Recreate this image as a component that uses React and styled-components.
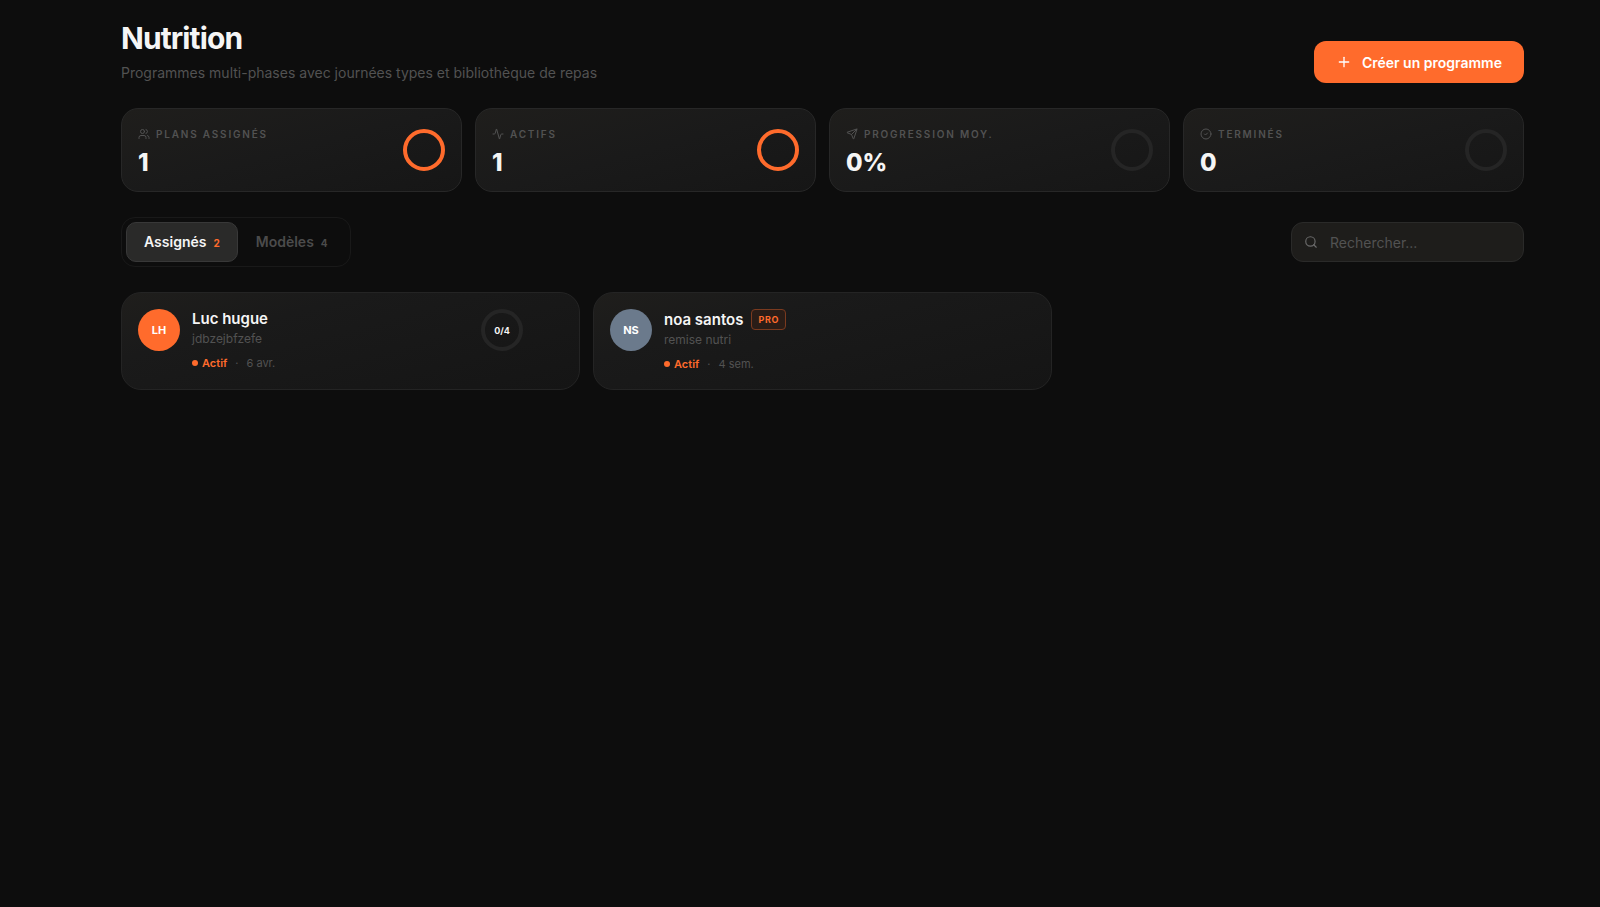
import React, { useState } from "react";
import styled, { createGlobalStyle } from "styled-components";
import { Activity, CircleCheck, Plus, Search, Send, Users } from "lucide-react";

//DATA
const stats = [
  { label: "Plans assignés", value: "1", icon: Users, full: true },
  { label: "Actifs", value: "1", icon: Activity, full: true },
  { label: "Progression moy.", value: "0%", icon: Send, full: false },
  { label: "Terminés", value: "0", icon: CircleCheck, full: false },
];

const clients = [
  {
    initials: "LH",
    name: "Luc hugue",
    plan: "jdbzejbfzefe",
    time: "6 avr.",
    color: "#ff6b2c",
    progress: "0/4",
  },
  {
    initials: "NS",
    name: "noa santos",
    plan: "remise nutri",
    time: "4 sem.",
    color: "#6b7a8c",
    pro: true,
  },
];

const tabs = [
  { id: "assigned", label: "Assignés", count: 2 },
  { id: "models", label: "Modèles", count: 4 },
];

export default function App() {
  const [tab, setTab] = useState("assigned");
  const [query, setQuery] = useState("");

  const shown = clients.filter((c) =>
    c.name.toLowerCase().includes(query.toLowerCase())
  );

  return (
    <>
      <GlobalStyle />
      <Page>
        <Header>
          <div>
            <Title>Nutrition</Title>
            <Subtitle>
              Programmes multi-phases avec journées types et bibliothèque de
              repas
            </Subtitle>
          </div>
          <CreateButton type="button">
            <Plus size={16} strokeWidth={2} />
            Créer un programme
          </CreateButton>
        </Header>

        <Stats>
          {stats.map(({ label, value, icon: Icon, full }) => (
            <StatCard key={label}>
              <div>
                <StatLabel>
                  <Icon size={12} strokeWidth={2} />
                  {label}
                </StatLabel>
                <StatValue>{value}</StatValue>
              </div>
              <Ring $full={full} />
            </StatCard>
          ))}
        </Stats>

        <Toolbar>
          <Tabs role="tablist">
            {tabs.map((t) => (
              <Tab
                key={t.id}
                type="button"
                role="tab"
                aria-selected={tab === t.id}
                $active={tab === t.id}
                onClick={() => setTab(t.id)}
              >
                {t.label}
                <Count $active={tab === t.id}>{t.count}</Count>
              </Tab>
            ))}
          </Tabs>
          <SearchBox>
            <Search size={14} strokeWidth={2} />
            <SearchInput
              type="text"
              aria-label="Rechercher"
              placeholder="Rechercher..."
              value={query}
              onChange={(e) => setQuery(e.target.value)}
            />
          </SearchBox>
        </Toolbar>

        <Clients>
          {shown.map((c) => (
            <ClientCard key={c.name}>
              <Avatar $color={c.color}>{c.initials}</Avatar>
              <Info>
                <NameRow>
                  <Name>{c.name}</Name>
                  {c.pro && <ProBadge>PRO</ProBadge>}
                </NameRow>
                <Plan>{c.plan}</Plan>
                <Meta>
                  <Status>Actif</Status>
                  <span>·</span>
                  <span>{c.time}</span>
                </Meta>
              </Info>
              {c.progress && <Ring>{c.progress}</Ring>}
            </ClientCard>
          ))}
        </Clients>
      </Page>
    </>
  );
}

//STYLED COMPONENTS
const GlobalStyle = createGlobalStyle`
  * {
    box-sizing: border-box;
  }
  body {
    margin: 0;
    background: #0d0d0d;
    color: #f5f5f5;
    font-family: Inter, "Liberation Sans", sans-serif;
    -webkit-font-smoothing: antialiased;
  }
  button,
  input {
    font-family: inherit;
  }
`;

const Page = styled.main`
  padding: 20px 76px 40px 121px;
`;

const Header = styled.header`
  display: flex;
  justify-content: space-between;
  align-items: flex-end;
`;

const Title = styled.h1`
  margin: 0;
  font-size: 30px;
  line-height: 36px;
  font-weight: 700;
  letter-spacing: -0.03em;
`;

const Subtitle = styled.p`
  margin: 7px 0 0;
  font-size: 14px;
  line-height: 20px;
  color: #525252;
`;

const CreateButton = styled.button`
  display: flex;
  align-items: center;
  gap: 10px;
  height: 42px;
  padding: 0 22px;
  border: none;
  border-radius: 12px;
  background: #ff6b2c;
  color: #fff;
  font-size: 14px;
  font-weight: 600;
  cursor: pointer;
`;

const Stats = styled.section`
  display: grid;
  grid-template-columns: repeat(4, 1fr);
  gap: 13px;
  margin-top: 25px;
`;

const StatCard = styled.div`
  display: flex;
  justify-content: space-between;
  align-items: center;
  padding: 16px;
  border: 1px solid #272727;
  border-radius: 17px;
  background: linear-gradient(165deg, #1f1e1c 0%, #1a1a1a 50%, #161616 100%);
`;

const StatLabel = styled.div`
  display: flex;
  align-items: center;
  gap: 6px;
  font-size: 10px;
  line-height: 18px;
  font-weight: 600;
  letter-spacing: 0.18em;
  text-transform: uppercase;
  color: #525252;
`;

const StatValue = styled.div`
  margin-top: 8px;
  font-size: 24px;
  line-height: 24px;
  font-weight: 800;
`;

const Ring = styled.div`
  display: flex;
  flex-shrink: 0;
  align-items: center;
  justify-content: center;
  width: 42px;
  height: 42px;
  border: 4px solid ${(props) => (props.$full ? "#ff6b2c" : "#252525")};
  border-radius: 50%;
  font-size: 9px;
  font-weight: 700;
`;

const Toolbar = styled.div`
  display: flex;
  justify-content: space-between;
  align-items: center;
  margin-top: 25px;
`;

const Tabs = styled.div`
  display: flex;
  padding: 4px;
  border: 1px solid #191919;
  border-radius: 14px;
`;

const Tab = styled.button`
  display: flex;
  align-items: baseline;
  gap: 7px;
  padding: 10px 17px;
  border: 1px solid ${(props) => (props.$active ? "#383838" : "transparent")};
  border-radius: 10px;
  background: ${(props) => (props.$active ? "#2a2a29" : "transparent")};
  color: ${(props) => (props.$active ? "#f5f5f5" : "#4b4b4b")};
  font-size: 14px;
  line-height: 18px;
  font-weight: 600;
  cursor: pointer;
`;

const Count = styled.span`
  color: ${(props) => (props.$active ? "#ff6b2c" : "inherit")};
  font-size: 10px;
  line-height: 14px;
  font-weight: 700;
`;

const SearchBox = styled.label`
  display: flex;
  align-items: center;
  gap: 12px;
  width: 233px;
  height: 40px;
  padding: 0 12px;
  border: 1px solid #2a2a29;
  border-radius: 12px;
  background: #1e1d1b;
  color: #6b6b6b;

  svg {
    flex-shrink: 0;
  }
`;

const SearchInput = styled.input`
  min-width: 0;
  width: 100%;
  height: 18px;
  padding: 0;
  border: none;
  outline: none;
  background: none;
  color: #f5f5f5;
  font-size: 14px;

  &::placeholder {
    color: #525252;
  }
`;

const Clients = styled.section`
  display: grid;
  grid-template-columns: repeat(3, 1fr);
  gap: 13px;
  margin-top: 25px;
`;

const ClientCard = styled.article`
  display: flex;
  align-items: flex-start;
  gap: 12px;
  padding: 16px 56px 18px 16px;
  border: 1px solid #242424;
  border-radius: 20px;
  background: linear-gradient(165deg, #1f1e1c 0%, #1a1a1a 30%, #151515 100%);
`;

const Avatar = styled.div`
  display: flex;
  flex-shrink: 0;
  align-items: center;
  justify-content: center;
  width: 42px;
  height: 42px;
  border-radius: 50%;
  background: ${(props) => props.$color};
  color: #fff;
  font-size: 11px;
  font-weight: 700;
`;

const Info = styled.div`
  flex: 1;
  min-width: 0;
`;

const NameRow = styled.div`
  display: flex;
  align-items: center;
  gap: 8px;
`;

const Name = styled.h2`
  margin: 0;
  font-size: 15px;
  line-height: 20px;
  font-weight: 600;
`;

const ProBadge = styled.span`
  padding: 3px 6px;
  border: 1px solid #7a3a1f;
  border-radius: 4px;
  background: #2a1d17;
  color: #ff6b2c;
  font-size: 9px;
  line-height: 13px;
  font-weight: 700;
  letter-spacing: 0.08em;
`;

const Plan = styled.p`
  margin: 1px 0 0;
  font-size: 12px;
  line-height: 18px;
  color: #525252;
`;

const Meta = styled.div`
  display: flex;
  align-items: center;
  gap: 8px;
  margin-top: 8px;
  font-size: 11px;
  line-height: 14px;
  color: #525252;
`;

const Status = styled.span`
  display: flex;
  align-items: center;
  gap: 4px;
  color: #ff6b2c;
  font-weight: 600;

  &::before {
    content: "";
    width: 6px;
    height: 6px;
    border-radius: 50%;
    background: #ff6b2c;
  }
`;
